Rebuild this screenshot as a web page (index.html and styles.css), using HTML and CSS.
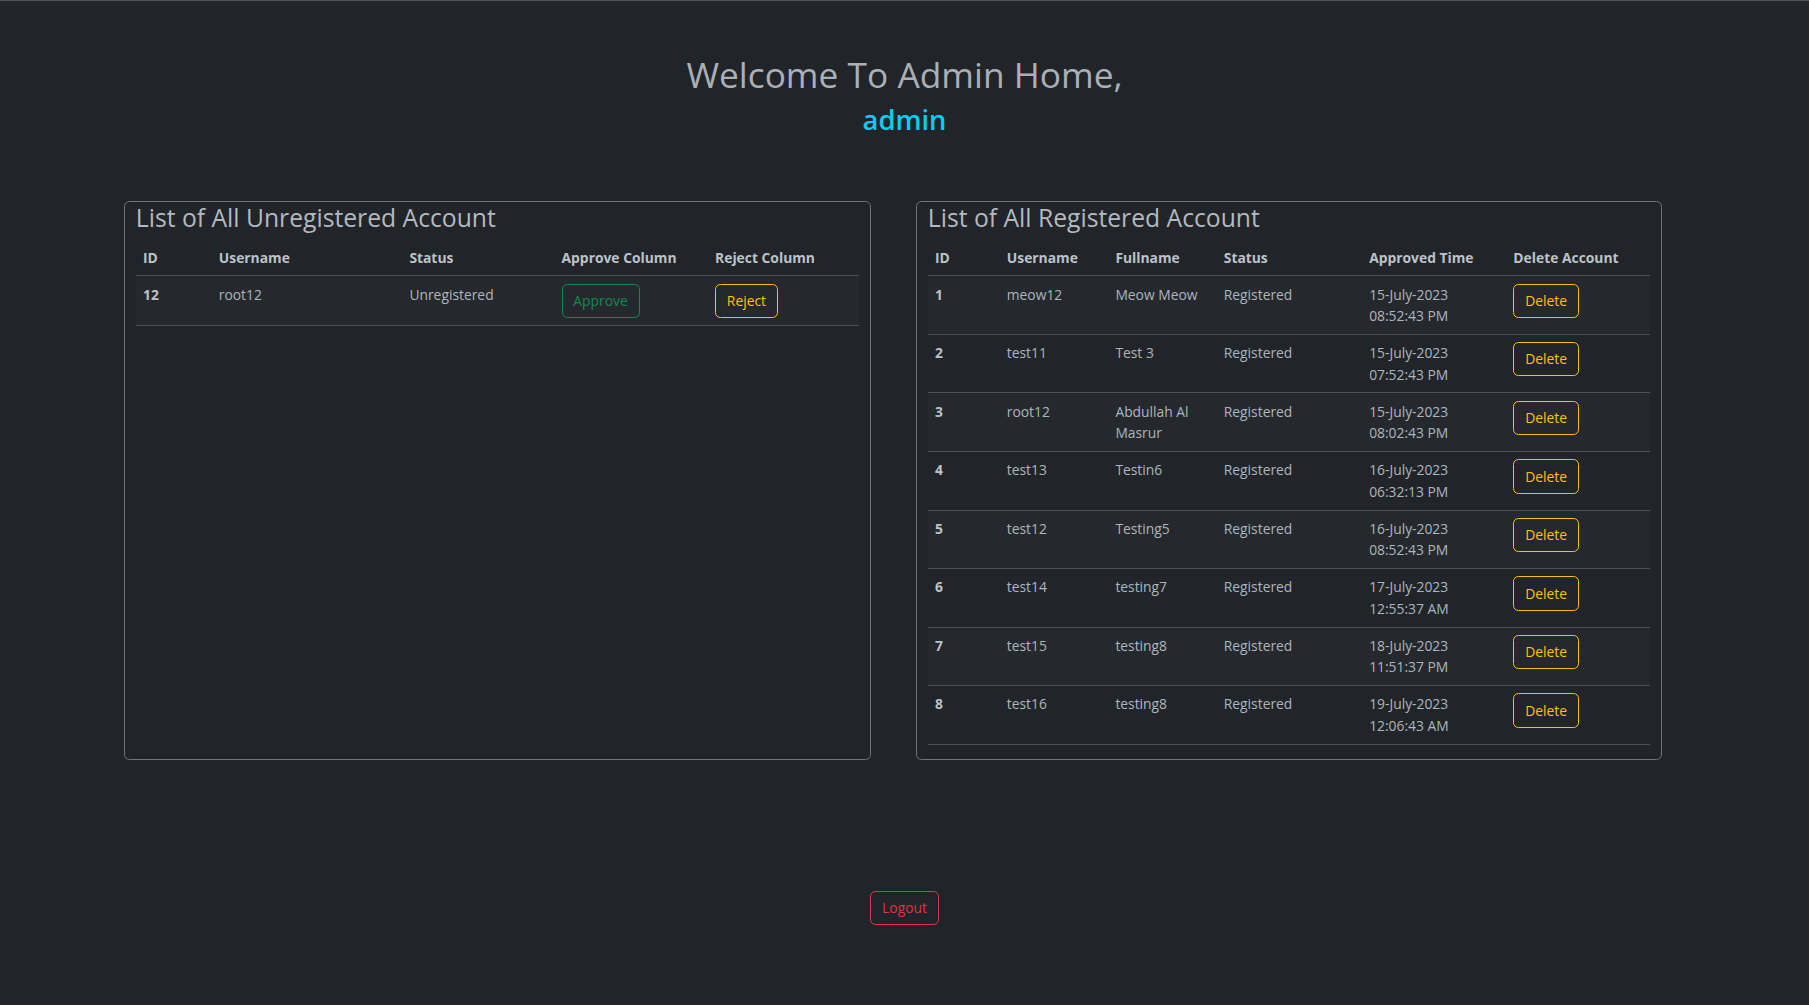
FILE: index.html
```html
<!DOCTYPE html>
<html lang="en">
<head>
<meta charset="utf-8">
<title>Admin Home</title>
<link rel="stylesheet" href="styles.css">
</head>
<body>
<header class="welcome">
  <h1 class="welcome-title">Welcome To Admin Home,</h1>
  <h2 class="welcome-user">admin</h2>
</header>

<main class="panels">
  <section class="panel">
    <h3 class="panel-title">List of All Unregistered Account</h3>
    <table class="data-table">
      <colgroup>
        <col class="u-id"><col class="u-user"><col class="u-status"><col class="u-approve"><col class="u-reject">
      </colgroup>
      <thead>
        <tr><th>ID</th><th>Username</th><th>Status</th><th>Approve Column</th><th>Reject Column</th></tr>
      </thead>
      <tbody>
        <tr>
          <th>12</th><td>root12</td><td>Unregistered</td>
          <td><button class="btn btn-success">Approve</button></td>
          <td><button class="btn btn-warning">Reject</button></td>
        </tr>
      </tbody>
    </table>
  </section>

  <section class="panel">
    <h3 class="panel-title">List of All Registered Account</h3>
    <table class="data-table">
      <colgroup>
        <col class="r-id"><col class="r-user"><col class="r-full"><col class="r-status"><col class="r-time"><col class="r-del">
      </colgroup>
      <thead>
        <tr><th>ID</th><th>Username</th><th>Fullname</th><th>Status</th><th>Approved Time</th><th>Delete Account</th></tr>
      </thead>
      <tbody>
        <tr><th>1</th><td>meow12</td><td>Meow Meow</td><td>Registered</td><td>15-July-2023<br>08:52:43 PM</td><td><button class="btn btn-warning">Delete</button></td></tr>
        <tr><th>2</th><td>test11</td><td>Test 3</td><td>Registered</td><td>15-July-2023<br>07:52:43 PM</td><td><button class="btn btn-warning">Delete</button></td></tr>
        <tr><th>3</th><td>root12</td><td>Abdullah Al Masrur</td><td>Registered</td><td>15-July-2023<br>08:02:43 PM</td><td><button class="btn btn-warning">Delete</button></td></tr>
        <tr><th>4</th><td>test13</td><td>Testin6</td><td>Registered</td><td>16-July-2023<br>06:32:13 PM</td><td><button class="btn btn-warning">Delete</button></td></tr>
        <tr><th>5</th><td>test12</td><td>Testing5</td><td>Registered</td><td>16-July-2023<br>08:52:43 PM</td><td><button class="btn btn-warning">Delete</button></td></tr>
        <tr><th>6</th><td>test14</td><td>testing7</td><td>Registered</td><td>17-July-2023<br>12:55:37 AM</td><td><button class="btn btn-warning">Delete</button></td></tr>
        <tr><th>7</th><td>test15</td><td>testing8</td><td>Registered</td><td>18-July-2023<br>11:51:37 PM</td><td><button class="btn btn-warning">Delete</button></td></tr>
        <tr><th>8</th><td>test16</td><td>testing8</td><td>Registered</td><td>19-July-2023<br>12:06:43 AM</td><td><button class="btn btn-warning">Delete</button></td></tr>
      </tbody>
    </table>
  </section>
</main>

<footer class="logout-wrap">
  <button class="btn btn-danger">Logout</button>
</footer>
</body>
</html>
```

FILE: styles.css
```css
html, body {
  margin: 0;
  padding: 0;
}

body {
  background: #212529;
  color: #adb5bd;
  font-family: "Open Sans", "Noto Sans", sans-serif;
  font-size: 13.85px;
  line-height: 21.6px;
  border-top: 1px solid #4f5357;
  min-height: 1004px;
}

.welcome {
  padding-top: 51.8px;
  text-align: center;
}

.welcome-title {
  margin: 0 0 7.2px;
  font-size: 35.3px;
  line-height: 43.2px;
  font-weight: 400;
  color: #aab0b6;
}

.welcome-user {
  margin: 0;
  font-size: 27.3px;
  line-height: 34.56px;
  font-weight: 600;
  color: #0dcaf0;
}

.panels {
  display: grid;
  grid-template-columns: 747px 746px;
  column-gap: 45px;
  margin: 63.2px 0 0 124px;
}

.panel {
  border: 1px solid #6f757b;
  border-radius: 5.4px;
  padding: 0 10.8px;
}

.panel-title {
  margin: 0 0 6.2px;
  padding-top: 1px;
  font-size: 24.7px;
  line-height: 30.24px;
  font-weight: 400;
  color: #b3b9bf;
}

.data-table {
  width: 100%;
  table-layout: fixed;
  border-collapse: collapse;
  margin-bottom: 14.4px;
}

.data-table th,
.data-table td {
  padding: 7.2px;
  text-align: left;
  vertical-align: top;
}

.data-table th {
  font-weight: 700;
  color: #bcc2c8;
}

.data-table td {
  font-weight: 400;
  color: #adb5bd;
}

.data-table tr {
  border-bottom: 1px solid #4b5055;
}

.data-table tbody tr:nth-child(odd) {
  background: rgba(255, 255, 255, 0.02);
}

.u-id { width: 75.8px; }
.u-user { width: 190.6px; }
.u-status { width: 152.2px; }
.u-approve { width: 153.5px; }
.u-reject { width: 151.5px; }

.r-id { width: 71.8px; }
.r-user { width: 108.6px; }
.r-full { width: 108.4px; }
.r-status { width: 145.4px; }
.r-time { width: 144.2px; }
.r-del { width: 144px; }

.btn {
  display: inline-block;
  font-family: inherit;
  font-size: 13.85px;
  line-height: 21.6px;
  font-weight: 400;
  padding: 5.4px 10.8px;
  background: transparent;
  border: 1px solid;
  border-radius: 5.4px;
  cursor: pointer;
}

.btn-success {
  color: #198754;
  border-color: #198754;
}

.btn-warning {
  color: #ffc107;
  border-color: #ffc107;
}

.btn-danger {
  color: #dc3545;
  border-color: #dc3545;
}

.logout-wrap {
  margin-top: 130.7px;
  text-align: center;
}
```
